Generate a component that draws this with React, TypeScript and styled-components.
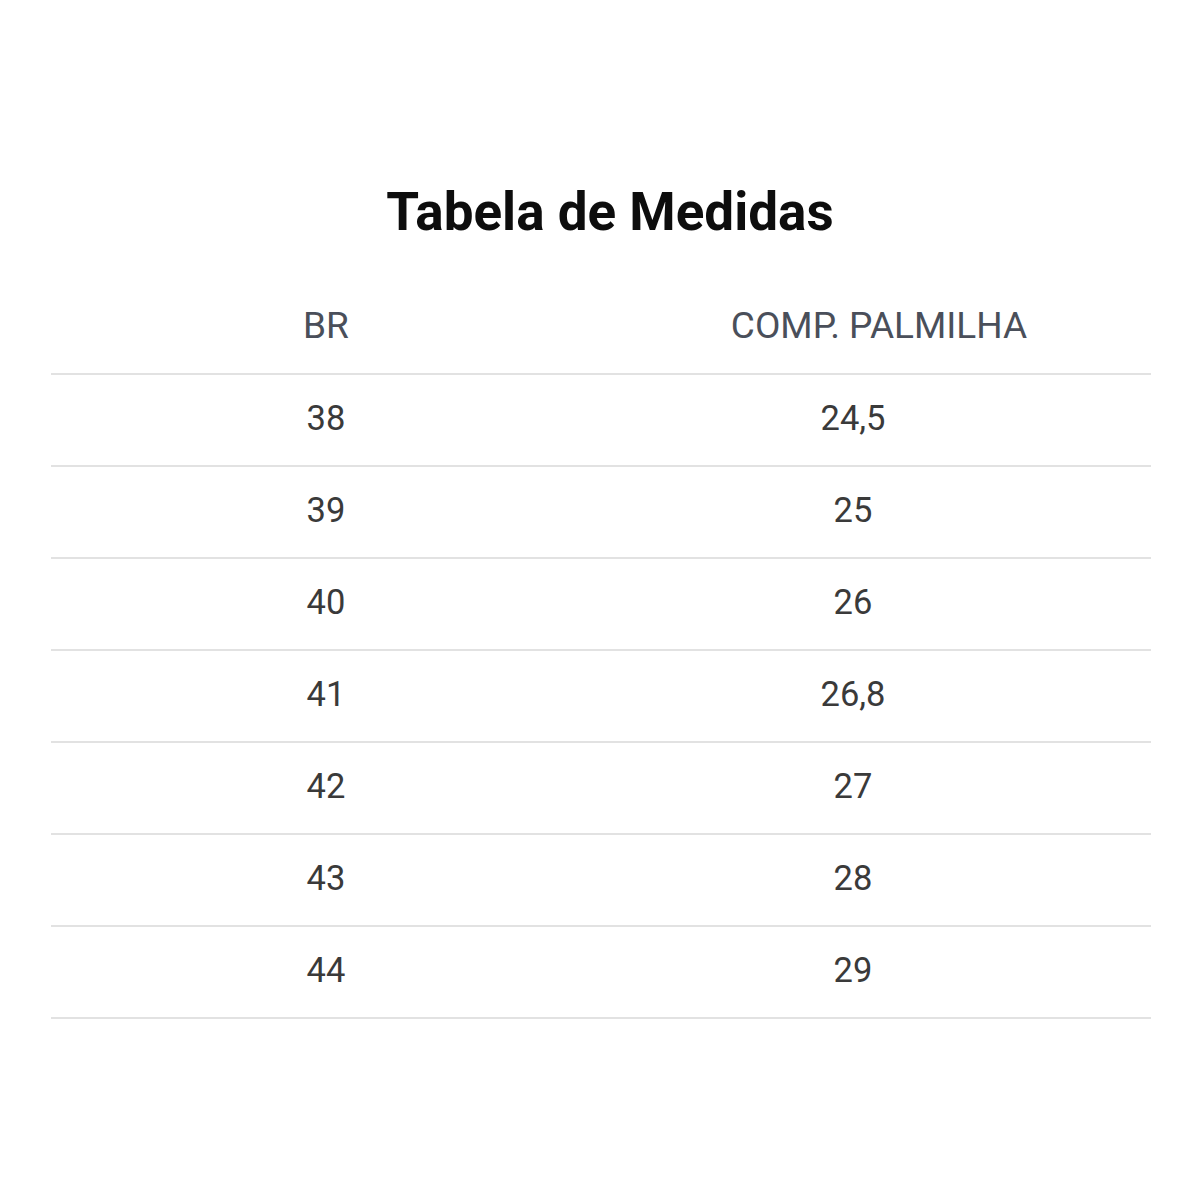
import styled, { createGlobalStyle } from "styled-components";

interface SizeRow {
  br: string;
  length: string;
}

const rows: SizeRow[] = [
  { br: "38", length: "24,5" },
  { br: "39", length: "25" },
  { br: "40", length: "26" },
  { br: "41", length: "26,8" },
  { br: "42", length: "27" },
  { br: "43", length: "28" },
  { br: "44", length: "29" },
];

const GlobalStyle = createGlobalStyle`
  body {
    margin: 0;
    background: #ffffff;
    font-family: Roboto, "Liberation Sans", sans-serif;
  }
`;

const App = () => {
  return (
    <>
      <GlobalStyle />
      <Page>
        <Title>Tabela de Medidas</Title>
        <Table>
          <HeaderRow>
            <HeadCell>BR</HeadCell>
            <HeadCell $offset={6}>COMP. PALMILHA</HeadCell>
          </HeaderRow>
          {rows.map((row) => (
            <Row key={row.br}>
              <Cell>{row.br}</Cell>
              <Cell $shift={46}>{row.length}</Cell>
            </Row>
          ))}
        </Table>
      </Page>
    </>
  );
};

const Page = styled.div`
  width: 1200px;
  display: flex;
  flex-direction: column;
  align-items: center;
  padding-top: 182px;
`;

const Title = styled.h1`
  margin: 0 0 0 20px;
  height: 60px;
  line-height: 60px;
  font-size: 53px;
  font-weight: 700;
  color: #0d0d0d;
`;

const Table = styled.div`
  width: 1100px;
  margin-left: 2px;
  display: flex;
  flex-direction: column;
`;

const HeaderRow = styled.div`
  display: grid;
  grid-template-columns: 1fr 1fr;
  padding: 64px 0 27px;
  border-bottom: 2px solid #e2e2e2;
`;

const Row = styled.div`
  display: grid;
  grid-template-columns: 1fr 1fr;
  padding: 23px 0 27px;
  border-bottom: 2px solid #e2e2e2;
`;

const HeadCell = styled.div<{ $offset?: number }>`
  text-align: center;
  height: 40px;
  line-height: 40px;
  font-size: 37px;
  color: #4a4f5a;
  padding-left: ${(props) => (props.$offset ? `${props.$offset}px` : "0px")};
`;

const Cell = styled.div<{ $shift?: number }>`
  text-align: center;
  height: 40px;
  line-height: 40px;
  font-size: 34.5px;
  color: #3a3a3a;
  padding-right: ${(props) => (props.$shift ? `${props.$shift}px` : "0px")};
`;

export default App;
